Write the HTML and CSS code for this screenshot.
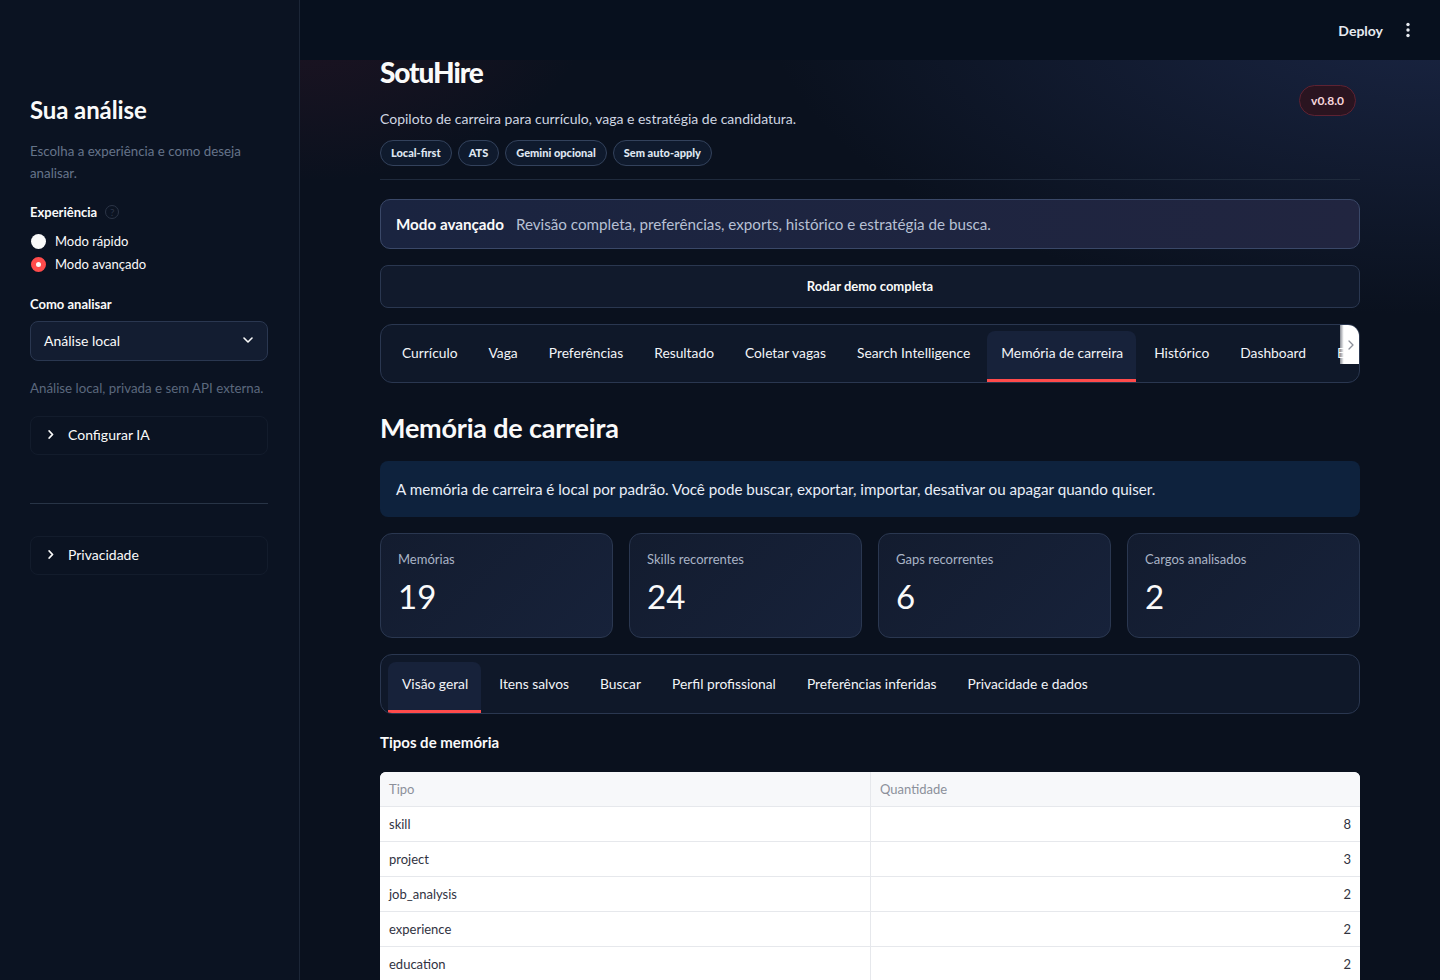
FILE: index.html
```html
<!doctype html>
<html lang="pt-BR">

<head>
	<meta charset="UTF-8">
	<meta name="viewport" content="width=device-width, initial-scale=1.0" />
	<title>SotuHire</title>
	<link rel="stylesheet" href="styles.css">
</head>

<body>
	<aside class="sidebar">
		<h2 class="side-title">Sua análise</h2>
		<p class="side-caption">Escolha a experiência e como deseja analisar.</p>

		<div class="field-label">Experiência <span class="help-dot">?</span></div>
		<div class="radio-group">
			<label class="radio"><span class="radio-mark"></span>Modo rápido</label>
			<label class="radio is-checked"><span class="radio-mark"></span>Modo avançado</label>
		</div>

		<div class="field-label field-label--gap">Como analisar</div>
		<div class="select">
			<span>Análise local</span>
			<svg width="10" height="6" viewBox="0 0 10 6"><path d="M1 1l4 4 4-4" fill="none" stroke="#fafafa" stroke-width="1.6" stroke-linecap="round" stroke-linejoin="round"/></svg>
		</div>
		<p class="side-caption side-caption--small">Análise local, privada e sem API externa.</p>

		<div class="expander">
			<svg width="6" height="9" viewBox="0 0 6 9"><path d="M1.2 1l3.3 3.5L1.2 8" fill="none" stroke="#fafafa" stroke-width="1.8" stroke-linecap="round" stroke-linejoin="round"/></svg>
			<span>Configurar IA</span>
		</div>

		<hr class="side-rule">

		<div class="expander expander--privacy">
			<svg width="6" height="9" viewBox="0 0 6 9"><path d="M1.2 1l3.3 3.5L1.2 8" fill="none" stroke="#fafafa" stroke-width="1.8" stroke-linecap="round" stroke-linejoin="round"/></svg>
			<span>Privacidade</span>
		</div>
	</aside>

	<main class="main">
		<div class="topbar">
			<span class="deploy">Deploy</span>
			<svg class="kebab" width="6" height="16" viewBox="0 0 6 16"><circle cx="3" cy="2.5" r="1.7" fill="#e6eaf0"/><circle cx="3" cy="8" r="1.7" fill="#e6eaf0"/><circle cx="3" cy="13.5" r="1.7" fill="#e6eaf0"/></svg>
		</div>

		<div class="content">
			<section class="hero">
				<div class="hero-text">
					<h1 class="brand">SotuHire</h1>
					<p class="tagline">Copiloto de carreira para currículo, vaga e estratégia de candidatura.</p>
					<div class="chips">
						<span class="chip">Local-first</span>
						<span class="chip">ATS</span>
						<span class="chip">Gemini opcional</span>
						<span class="chip">Sem auto-apply</span>
					</div>
				</div>
				<span class="version">v0.8.0</span>
			</section>

			<hr class="rule">

			<div class="mode-banner">
				<strong>Modo avançado</strong>
				<span>Revisão completa, preferências, exports, histórico e estratégia de busca.</span>
			</div>

			<button class="demo-btn">Rodar demo completa</button>

			<nav class="tabs">
				<div class="tab-list">
					<span class="tab">Currículo</span>
					<span class="tab">Vaga</span>
					<span class="tab">Preferências</span>
					<span class="tab">Resultado</span>
					<span class="tab">Coletar vagas</span>
					<span class="tab">Search Intelligence</span>
					<span class="tab is-active">Memória de carreira</span>
					<span class="tab">Histórico</span>
					<span class="tab">Dashboard</span>
					<span class="tab">Exportar</span>
				</div>
				<span class="tab-scroll">
					<svg width="6" height="10" viewBox="0 0 6 10"><path d="M1 1l4 4-4 4" fill="none" stroke="#8b8f99" stroke-width="1.3" stroke-linecap="round" stroke-linejoin="round"/></svg>
				</span>
			</nav>

			<h2 class="section-title">Memória de carreira</h2>

			<div class="info-box">A memória de carreira é local por padrão. Você pode buscar, exportar, importar, desativar ou apagar quando quiser.</div>

			<div class="metrics">
				<div class="metric">
					<span class="metric-label">Memórias</span>
					<span class="metric-value">19</span>
				</div>
				<div class="metric">
					<span class="metric-label">Skills recorrentes</span>
					<span class="metric-value">24</span>
				</div>
				<div class="metric">
					<span class="metric-label">Gaps recorrentes</span>
					<span class="metric-value">6</span>
				</div>
				<div class="metric">
					<span class="metric-label">Cargos analisados</span>
					<span class="metric-value">2</span>
				</div>
			</div>

			<nav class="tabs tabs--sub">
				<div class="tab-list">
					<span class="tab is-active">Visão geral</span>
					<span class="tab">Itens salvos</span>
					<span class="tab">Buscar</span>
					<span class="tab">Perfil profissional</span>
					<span class="tab">Preferências inferidas</span>
					<span class="tab">Privacidade e dados</span>
				</div>
			</nav>

			<h3 class="sub-title">Tipos de memória</h3>

			<table class="data-table">
				<thead>
					<tr><th>Tipo</th><th>Quantidade</th></tr>
				</thead>
				<tbody>
					<tr><td>skill</td><td class="num">8</td></tr>
					<tr><td>project</td><td class="num">3</td></tr>
					<tr><td>job_analysis</td><td class="num">2</td></tr>
					<tr><td>experience</td><td class="num">2</td></tr>
					<tr><td>education</td><td class="num">2</td></tr>
				</tbody>
			</table>
		</div>
	</main>
</body>

</html>
```

FILE: styles.css
```css
:root {
	--bg: #0a111e;
	--sidebar-bg: #0b1322;
	--topbar-bg: #07101e;
	--text: #fafafa;
	--muted: #66748a;
	--border: #2a3750;
	--panel: #0f1829;
	--panel-active: #17223a;
	--accent: #ff4b4b;
}

* {
	box-sizing: border-box;
	margin: 0;
	padding: 0;
}

body {
	display: flex;
	min-height: 100vh;
	height: 980px;
	overflow: hidden;
	background: var(--bg);
	color: var(--text);
	font-family: "Lato", "Noto Sans", sans-serif;
	font-size: 14px;
}

/* sidebar */
.sidebar {
	width: 300px;
	flex: none;
	background: var(--sidebar-bg);
	border-right: 1px solid #1c2637;
	padding: 96px 31px 0 30px;
	display: flex;
	flex-direction: column;
}

.side-title {
	font-size: 24px;
	line-height: 28px;
	font-weight: 700;
	letter-spacing: -0.1px;
}

.side-caption {
	margin-top: 16px;
	color: var(--muted);
	font-size: 13.3px;
	line-height: 22px;
}

.side-caption--small {
	margin-top: 16px;
	color: #5b687d;
}

.field-label {
	margin-top: 18px;
	font-size: 13px;
	line-height: 20px;
	font-weight: 700;
	display: flex;
	align-items: center;
	gap: 8px;
}

.field-label--gap {
	margin-top: 20px;
}

.help-dot {
	width: 14px;
	height: 14px;
	border: 1px solid #2b3547;
	border-radius: 50%;
	color: #2b3547;
	font-size: 10px;
	line-height: 12px;
	text-align: center;
	font-weight: 400;
}

.radio-group {
	margin-top: 9px;
	display: flex;
	flex-direction: column;
	gap: 3px;
}

.radio {
	display: flex;
	align-items: center;
	gap: 9px;
	font-size: 13px;
	line-height: 20px;
}

.radio-mark {
	width: 15px;
	height: 15px;
	border-radius: 50%;
	background: #fafafa;
	margin-left: 1px;
}

/* selected radio: red ring around a white dot */
.is-checked .radio-mark {
	border: 5px solid var(--accent);
	background: #fafafa;
}

.select {
	margin-top: 7px;
	height: 40px;
	background: #131d31;
	border: 1px solid var(--border);
	border-radius: 8px;
	padding: 0 14px 2px 13px;
	display: flex;
	align-items: center;
	justify-content: space-between;
	font-size: 14px;
}

.expander {
	margin-top: 17px;
	height: 39px;
	border: 1px solid #131c2c;
	border-radius: 8px;
	padding: 0 17px 3px;
	display: flex;
	align-items: center;
	gap: 14px;
	font-size: 14px;
}

.side-rule {
	border: 0;
	height: 1px;
	background: #283446;
	margin-top: 48px;
}

.expander--privacy {
	margin-top: 32px;
}

/* main column */
.main {
	flex: 1;
	min-width: 0;
	overflow: hidden;
	display: flex;
	flex-direction: column;
	background:
		radial-gradient(ellipse 420px 260px at 0% 0%, rgba(110, 30, 50, 0.22), transparent 70%),
		radial-gradient(ellipse 900px 420px at 100% 0%, rgba(40, 55, 100, 0.55), transparent 75%),
		var(--bg);
}

.topbar {
	height: 60px;
	flex: none;
	background: var(--topbar-bg);
	display: flex;
	align-items: center;
	justify-content: flex-end;
	padding-right: 29px;
	gap: 22px;
}

.deploy {
	font-size: 14px;
	font-weight: 700;
	color: #e6eaf0;
}

.content {
	padding: 0 80px;
	display: flex;
	flex-direction: column;
}

.hero {
	display: flex;
	justify-content: space-between;
	align-items: flex-start;
}

.brand {
	font-size: 28px;
	line-height: 28px;
	font-weight: 900;
	letter-spacing: -1.1px;
	margin-top: -2px;
}

.tagline {
	margin-top: 23px;
	font-size: 14px;
	line-height: 20px;
	color: #cfd6e2;
}

.chips {
	margin-top: 11px;
	display: flex;
	gap: 6px;
}

.chip {
	height: 26px;
	padding: 0 10px;
	border: 1px solid #33425c;
	border-radius: 13px;
	background: #0f1a2d;
	font-size: 11px;
	font-weight: 900;
	line-height: 24px;
	color: #dfe6f1;
}

.version {
	margin-top: 25px;
	margin-right: 4px;
	height: 31px;
	padding: 0 11px;
	border: 1px solid #5e2232;
	border-radius: 16px;
	background: #2a1420;
	color: #f6d6dc;
	font-size: 12px;
	font-weight: 700;
	line-height: 29px;
}

.rule {
	border: 0;
	height: 1px;
	background: #1f2a3c;
	margin-top: 13px;
}

.mode-banner {
	margin-top: 19px;
	height: 50px;
	border: 1px solid #3a4868;
	border-radius: 10px;
	background: linear-gradient(90deg, #1a2440, #212540);
	display: flex;
	align-items: center;
	gap: 12px;
	padding: 0 15px 1px;
	font-size: 15.2px;
}

.mode-banner strong {
	font-weight: 700;
}

.mode-banner span {
	color: #b7c0d4;
}

.demo-btn {
	margin-top: 16px;
	height: 43px;
	padding-bottom: 2px;
	background: #111a2c;
	border: 1px solid var(--border);
	border-radius: 8px;
	color: var(--text);
	font-family: inherit;
	font-size: 13px;
	font-weight: 700;
}

/* tab bars */
.tabs {
	margin-top: 16px;
	position: relative;
	border: 1px solid var(--border);
	border-radius: 12px;
	background: var(--panel);
	padding: 6px 7px 0;
	overflow: hidden;
}

.tab-list {
	display: flex;
	gap: 4px;
	white-space: nowrap;
}

.tab {
	height: 51px;
	padding: 0 13px 6px 14px;
	border-radius: 8px 8px 0 0;
	border-bottom: 3px solid transparent;
	display: flex;
	align-items: center;
	font-size: 13.8px;
	color: #f2f4f8;
}

.tab.is-active {
	background: var(--panel-active);
	border-bottom-color: var(--accent);
}

/* scroll arrow laid over the end of the tab strip */
.tab-scroll {
	position: absolute;
	top: 0;
	right: 0;
	width: 19px;
	height: 39px;
	background: linear-gradient(90deg, rgba(255, 255, 255, 0.5), #fff 20%);
	display: flex;
	align-items: center;
	justify-content: center;
	padding-left: 3px;
}

.section-title {
	margin-top: 27px;
	font-size: 27px;
	line-height: 36px;
	font-weight: 700;
	letter-spacing: -0.2px;
}

.info-box {
	margin-top: 15px;
	height: 56px;
	border-radius: 8px;
	background: #0e223d;
	padding: 0 16px 1px;
	display: flex;
	align-items: center;
	font-size: 15.2px;
	color: #e8eef8;
}

.metrics {
	margin-top: 16px;
	display: grid;
	grid-template-columns: repeat(4, 1fr);
	gap: 16px;
}

.metric {
	height: 105px;
	border: 1px solid var(--border);
	border-radius: 12px;
	background: linear-gradient(135deg, #131c2f, #17223a);
	padding: 15px 17px 0;
	display: flex;
	flex-direction: column;
}

.metric-label {
	font-size: 13px;
	line-height: 20px;
	color: #a9b4c6;
}

.metric-value {
	margin-top: 7px;
	font-size: 33px;
	line-height: 40px;
}

.tabs--sub {
	padding-top: 7px;
}

.sub-title {
	margin-top: 18px;
	font-size: 15px;
	line-height: 20px;
	font-weight: 700;
}

/* dataframe */
.data-table {
	margin-top: 20px;
	width: 100%;
	border-collapse: separate;
	border-spacing: 0;
	background: #fff;
	border-radius: 6px 6px 0 0;
	overflow: hidden;
	font-size: 13px;
	color: #31333f;
}

.data-table th,
.data-table td {
	height: 35px;
	padding: 0 9px;
	text-align: left;
	border-bottom: 1px solid #e6e8ec;
	width: 50%;
}

.data-table th {
	background: #f7f8fa;
	color: #8c909a;
	font-weight: 400;
}

.data-table th + th,
.data-table td + td {
	border-left: 1px solid #e6e8ec;
}

.data-table .num {
	text-align: right;
}
```
